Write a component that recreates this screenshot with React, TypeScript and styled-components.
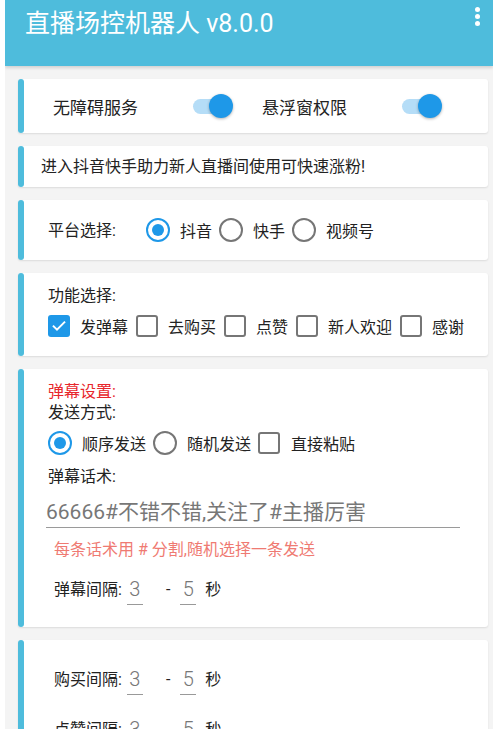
import React from 'react';
import styled, { createGlobalStyle } from 'styled-components';

const BLUE = '#1e98e8';
const ACCENT = '#4ebcdc';

const GlobalStyle = createGlobalStyle`
  html, body {
    margin: 0;
    padding: 0;
    background: #ffffff;
  }
  body {
    font-family: Roboto, "Noto Sans CJK SC", sans-serif;
    color: #222;
  }
`;

const Page = styled.div`
  margin-left: 5px;
  height: 729px;
  background: #f4f4f4;
  overflow: hidden;
`;

const Header = styled.header`
  display: flex;
  justify-content: space-between;
  height: 66px;
  padding: 7px 13px 0 20px;
  box-sizing: border-box;
  background: ${ACCENT};
  box-shadow: 0 2px 3px rgba(0, 0, 0, 0.14);
`;

const Title = styled.h1`
  margin: 0;
  font-size: 25px;
  line-height: 34px;
  font-weight: 400;
  color: #fff;
`;

const MenuDots = styled.div`
  display: flex;
  flex-direction: column;
  gap: 2px;
`;

const Dot = styled.span`
  width: 5px;
  height: 5px;
  border-radius: 50%;
  background: #fff;
`;

const Content = styled.main`
  display: flex;
  flex-direction: column;
  gap: 13px;
  padding: 13px 0 0 13px;
  width: 470px;
`;

const Card = styled.section`
  display: flex;
  background: #fff;
  border-radius: 3px;
  box-shadow: 0 1px 2px rgba(0, 0, 0, 0.1);
`;

const Accent = styled.div`
  flex: 0 0 6px;
  border-radius: 3px;
  background: ${ACCENT};
`;

const Body = styled.div<{ $h?: number; $pad?: string }>`
  flex: 1;
  display: flex;
  flex-direction: column;
  justify-content: ${p => (p.$h ? 'center' : 'flex-start')};
  height: ${p => (p.$h ? `${p.$h}px` : 'auto')};
  padding: ${p => p.$pad || '0 0 0 24px'};
  box-sizing: border-box;
`;

const Row = styled.div<{ $h?: number; $ml?: number }>`
  display: flex;
  align-items: center;
  height: ${p => (p.$h ? `${p.$h}px` : 'auto')};
  margin-left: ${p => p.$ml || 0}px;
`;

const Stack = styled.div<{ $gap: number; $mt?: number }>`
  display: flex;
  flex-direction: column;
  gap: ${p => p.$gap}px;
  margin-top: ${p => p.$mt || 0}px;
`;

const Text = styled.span<{ $color?: string; $ml?: number; $mr?: number; $mt?: number }>`
  font-size: 16px;
  line-height: 21px;
  color: ${p => p.$color || '#222'};
  white-space: nowrap;
  margin: ${p => `${p.$mt || 0}px ${p.$mr || 0}px 0 ${p.$ml || 0}px`};
`;

const SwitchLabel = styled.span`
  width: 140px;
  font-size: 17px;
  color: #222;
`;

const SwitchPair = styled.div`
  display: flex;
  align-items: center;
  margin-right: 35px;
`;

const Track = styled.div`
  display: flex;
  align-items: center;
  justify-content: flex-end;
  width: 34px;
  height: 15px;
  border-radius: 8px;
  background: #b5ddf7;
`;

const Thumb = styled.div`
  flex-shrink: 0;
  width: 24px;
  height: 24px;
  margin-right: -6px;
  border-radius: 50%;
  background: ${BLUE};
  box-shadow: 0 1px 3px rgba(0, 0, 0, 0.3);
`;

const Option = styled.label<{ $gap?: number; $mr?: number }>`
  display: flex;
  align-items: center;
  gap: ${p => p.$gap || 10}px;
  margin-right: ${p => p.$mr || 7}px;
  font-size: 16px;
  color: #222;
  white-space: nowrap;
`;

const Radio = styled.span<{ $on?: boolean }>`
  display: flex;
  align-items: center;
  justify-content: center;
  width: 24px;
  height: 24px;
  box-sizing: border-box;
  border-radius: 50%;
  border: 2.5px solid ${p => (p.$on ? BLUE : '#767676')};

  &::after {
    content: '';
    display: ${p => (p.$on ? 'block' : 'none')};
    width: 12px;
    height: 12px;
    border-radius: 50%;
    background: ${BLUE};
  }
`;

const Box = styled.span<{ $on?: boolean }>`
  display: flex;
  align-items: center;
  justify-content: center;
  width: 22px;
  height: 22px;
  box-sizing: border-box;
  border-radius: 3px;
  border: ${p => (p.$on ? 'none' : '2.5px solid #767676')};
  background: ${p => (p.$on ? BLUE : 'transparent')};
`;

const Field = styled.div<{ $ml: number }>`
  display: flex;
  flex-direction: column;
  align-items: center;
  width: 16px;
  padding-top: 5px;
  margin-left: ${p => p.$ml}px;
`;

const Digit = styled.span`
  font-size: 20px;
  line-height: 22px;
  font-weight: 300;
  color: #777;
`;

const Underline = styled.span`
  align-self: stretch;
  height: 1px;
  margin-top: 4px;
  background: #999;
`;

const Input = styled.div`
  margin: 10px 28px 0 -2px;
  font-size: 21px;
  line-height: 30px;
  color: #777;
  border-bottom: 1.5px solid #9a9a9a;
  white-space: nowrap;
`;

const Hint = styled.div`
  margin: 12px 0 0 6px;
  font-size: 16px;
  line-height: 20px;
  color: #ef7a72;
`;

const Check = () => (
  <svg width="16" height="16" viewBox="0 0 24 24" fill="none">
    <path d="M4 12.5l5 5L20 6.5" stroke="#fff" strokeWidth="3" strokeLinecap="square" />
  </svg>
);

const Interval = ({ label, from, to }: { label: string; from: number; to: number }) => (
  <Row $h={32} $ml={6}>
    <Text>{label}</Text>
    <Field $ml={5}>
      <Digit>{from}</Digit>
      <Underline />
    </Field>
    <Text $ml={23}>-</Text>
    <Field $ml={10}>
      <Digit>{to}</Digit>
      <Underline />
    </Field>
    <Text $ml={9}>秒</Text>
  </Row>
);

const App = () => {
  const features = [
    { name: '发弹幕', on: true },
    { name: '去购买', on: false },
    { name: '点赞', on: false },
    { name: '新人欢迎', on: false },
    { name: '感谢', on: false },
  ];

  return (
    <>
      <GlobalStyle />
      <Page>
        <Header>
          <Title>直播场控机器人 v8.0.0</Title>
          <MenuDots>
            <Dot />
            <Dot />
            <Dot />
          </MenuDots>
        </Header>

        <Content>
          <Card>
            <Accent />
            <Body $h={54} $pad="0 0 0 29px">
              <Row>
                <SwitchPair>
                  <SwitchLabel>无障碍服务</SwitchLabel>
                  <Track><Thumb /></Track>
                </SwitchPair>
                <SwitchPair>
                  <SwitchLabel>悬浮窗权限</SwitchLabel>
                  <Track><Thumb /></Track>
                </SwitchPair>
              </Row>
            </Body>
          </Card>

          <Card>
            <Accent />
            <Body $h={41} $pad="0 0 0 17px">
              <Text>进入抖音快手助力新人直播间使用可快速涨粉!</Text>
            </Body>
          </Card>

          <Card>
            <Accent />
            <Body $h={60}>
              <Row>
                <Text $mr={30}>平台选择:</Text>
                <Option><Radio $on />抖音</Option>
                <Option><Radio />快手</Option>
                <Option><Radio />视频号</Option>
              </Row>
            </Body>
          </Card>

          <Card>
            <Accent />
            <Body $pad="12px 0 10px 24px">
              <Text>功能选择:</Text>
              <Row $h={40}>
                {features.map(f => (
                  <Option key={f.name} $mr={8}>
                    <Box $on={f.on}>{f.on && <Check />}</Box>
                    {f.name}
                  </Option>
                ))}
              </Row>
            </Body>
          </Card>

          <Card>
            <Accent />
            <Body $pad="12px 0 22px 24px">
              <Text $color="#e8262c">弹幕设置:</Text>
              <Text>发送方式:</Text>
              <Row $h={40}>
                <Option><Radio $on />顺序发送</Option>
                <Option><Radio />随机发送</Option>
                <Option $gap={11}><Box />直接粘贴</Option>
              </Row>
              <Text $mt={3}>弹幕话术:</Text>
              <Input>66666#不错不错,关注了#主播厉害</Input>
              <Hint>每条话术用 # 分割,随机选择一条发送</Hint>
              <Stack $gap={0} $mt={13}>
                <Interval label="弹幕间隔:" from={3} to={5} />
              </Stack>
            </Body>
          </Card>

          <Card>
            <Accent />
            <Body $pad="23px 0 20px 24px">
              <Stack $gap={18}>
                <Interval label="购买间隔:" from={3} to={5} />
                <Interval label="点赞间隔:" from={3} to={5} />
                <Interval label="欢迎间隔:" from={3} to={5} />
              </Stack>
            </Body>
          </Card>
        </Content>
      </Page>
    </>
  );
};

export default App;
